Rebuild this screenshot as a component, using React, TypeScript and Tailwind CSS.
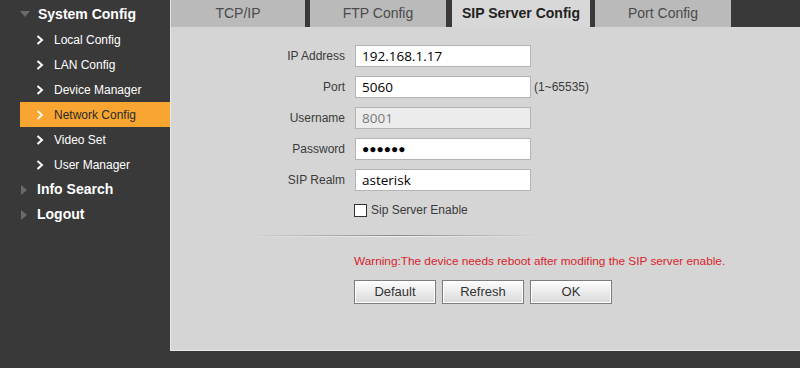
import React from 'react';

const subItems = ['Local Config', 'LAN Config', 'Device Manager', 'Network Config', 'Video Set', 'User Manager'];

function Chevron({ light }: { light?: boolean }) {
  return (
    <svg width="8" height="10" viewBox="0 0 8 10" className="mr-[10px]">
      <polyline points="1.5,1 6,5 1.5,9" fill="none" stroke={light ? '#fff5e0' : '#ffffff'} strokeWidth="2" />
    </svg>
  );
}

function Field({ label, value, disabled, note, password }: { label: string; value: string; disabled?: boolean; note?: string; password?: boolean }) {
  return (
    <div className="flex items-center h-[22px]">
      <div className="w-[184px] pr-[10px] text-right text-[12px] text-[#3a3a3a]">{label}</div>
      <div
        className={`w-[176px] h-[22px] border border-[#b4b4b4] flex items-center pl-[6px] font-['Open_Sans',sans-serif] text-[13.5px] ${
          disabled ? 'bg-[#ececec] text-[#7a7a7a]' : 'bg-white text-black'
        }`}
      >
        {password ? <span className="text-[12px] font-bold">●●●●●●</span> : value}
      </div>
      {note && <div className="ml-[3px] text-[12px] text-[#3a3a3a]">{note}</div>}
    </div>
  );
}

function Btn({ label }: { label: string }) {
  return (
    <button className="w-[82px] h-[24px] border border-[#7d7d7d] bg-gradient-to-b from-[#fdfdfd] to-[#d9d9d9] text-[13px] text-[#333] shadow-[inset_0_0_0_1px_#ffffff]">
      {label}
    </button>
  );
}

export default function App() {
  return (
    <div className="w-[800px] h-[368px] bg-[#393939] flex font-['Liberation_Sans',Arial,sans-serif] overflow-hidden">
      {/* sidebar */}
      <div className="w-[170px] pt-[2px] flex flex-col">
        <div className="h-[25px] flex items-center pl-[20px]">
          <svg width="10" height="7" viewBox="0 0 10 7" className="mr-[8px]">
            <polygon points="0,0 10,0 5,6" fill="#6a6a6a" />
          </svg>
          <span className="text-[14px] font-bold text-white">System Config</span>
        </div>
        {subItems.map((s) => {
          const active = s === 'Network Config';
          return (
            <div key={s} className={`h-[25px] flex items-center ml-[20px] pl-[16px] ${active ? 'bg-[#f8a631]' : ''}`}>
              <Chevron light={active} />
              <span className={`text-[12px] ${active ? 'text-[#2a2a2a]' : 'text-white'}`}>{s}</span>
            </div>
          );
        })}
        {['Info Search', 'Logout'].map((s) => (
          <div key={s} className="h-[25px] flex items-center pl-[21px]">
            <svg width="7" height="10" viewBox="0 0 7 10" className="mr-[9px]">
              <polygon points="0,0 6,5 0,10" fill="#6a6a6a" />
            </svg>
            <span className="text-[14px] font-bold text-white">{s}</span>
          </div>
        ))}
      </div>

      {/* main */}
      <div className="w-[630px] flex flex-col">
        <div className="h-[27px] flex">
          <div className="w-[135px] bg-[#bababa] flex items-center justify-center text-[14px] text-[#4a4a4a] border-l border-[#e2e2e2]">TCP/IP</div>
          <div className="w-[136px] ml-[5px] bg-[#bababa] flex items-center justify-center text-[14px] text-[#4a4a4a]">FTP Config</div>
          <div className="w-[138px] ml-[6px] bg-[#d8d8d8] flex items-center justify-center text-[14px] font-bold text-[#222]">SIP Server Config</div>
          <div className="w-[136px] ml-[5px] bg-[#bababa] flex items-center justify-center text-[14px] text-[#4a4a4a]">Port Config</div>
        </div>
        <div className="h-[324px] bg-[#d5d5d5] border-l border-b border-[#e8e8e8] flex flex-col pt-[18px]">
          <div className="flex flex-col gap-[9px]">
            <Field label="IP Address" value="192.168.1.17" />
            <Field label="Port" value="5060" note="(1~65535)" />
            <Field label="Username" value="8001" disabled />
            <Field label="Password" value="" password />
            <Field label="SIP Realm" value="asterisk" />
          </div>
          <div className="flex items-center h-[16px] mt-[11px] pl-[183px]">
            <div className="w-[13px] h-[13px] border border-[#333] bg-white mr-[4px]" />
            <span className="text-[12px] text-[#3a3a3a]">Sip Server Enable</span>
          </div>
          <div className="mt-[17px] ml-[80px] w-[290px] h-[2px] flex flex-col">
            <div className="h-px bg-gradient-to-r from-transparent via-[#8a8a8a] to-transparent" />
            <div className="h-px bg-gradient-to-r from-transparent via-[#f0f0f0] to-transparent" />
          </div>
          <div className="mt-[16px] pl-[183px] text-[11.8px] text-[#d9232b]">
            Warning:The device needs reboot after modifing the SIP server enable.
          </div>
          <div className="mt-[9px] pl-[183px] flex gap-[6px]">
            <Btn label="Default" />
            <Btn label="Refresh" />
            <Btn label="OK" />
          </div>
        </div>
      </div>
    </div>
  );
}
